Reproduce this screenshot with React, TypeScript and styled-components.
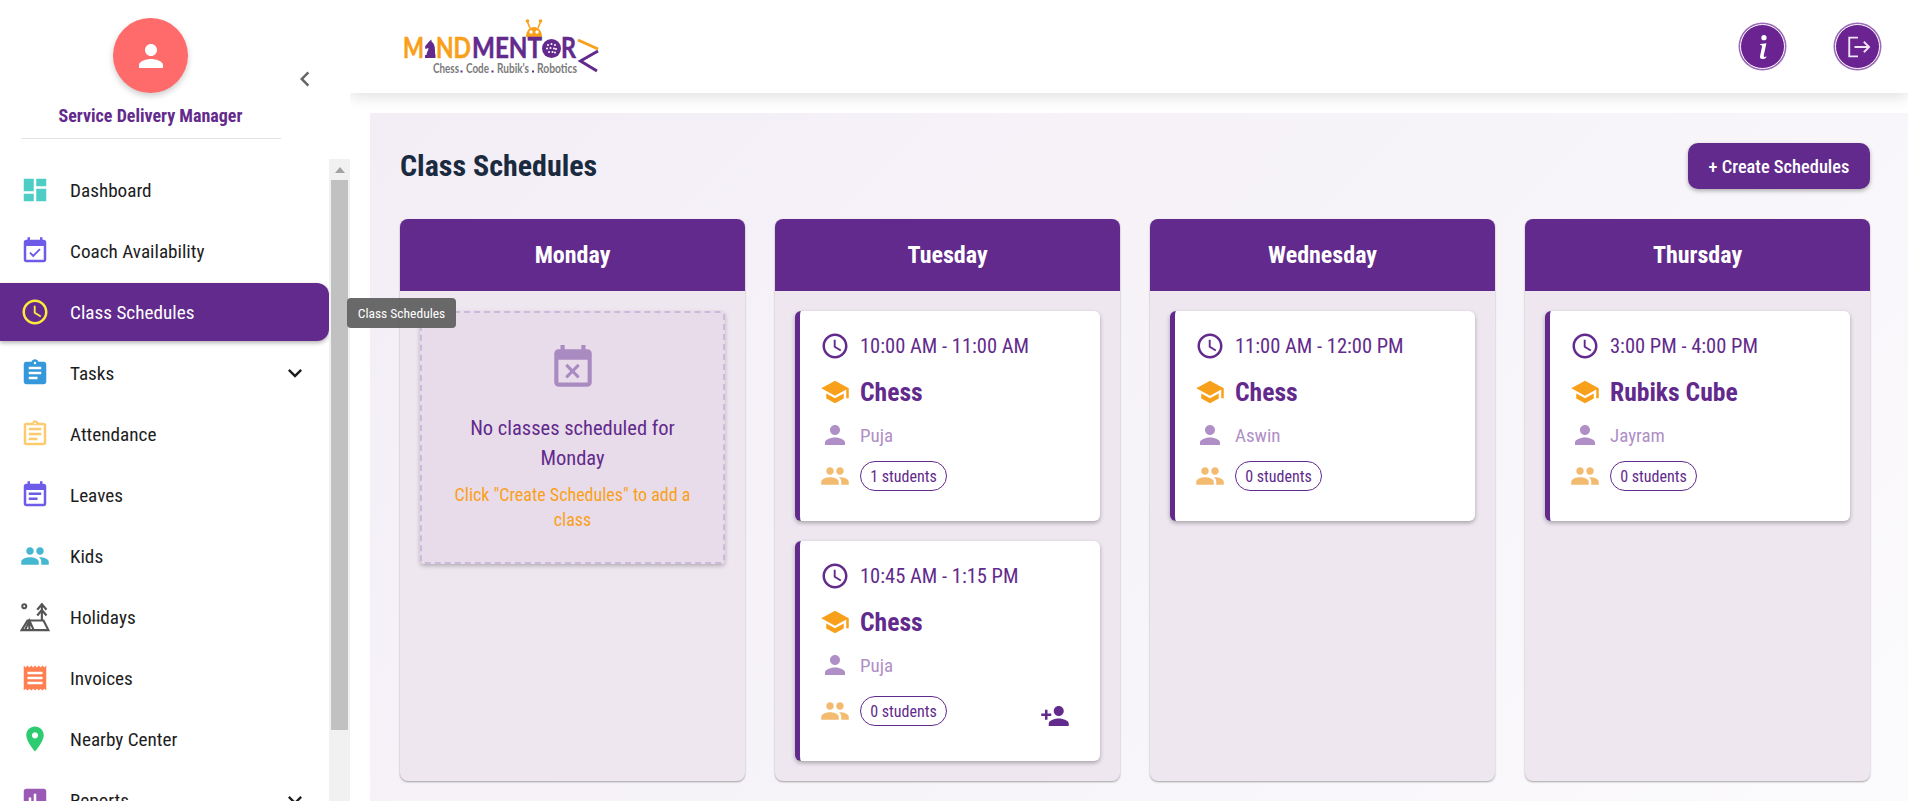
import React from 'react';
import styled, { createGlobalStyle } from 'styled-components';
import { BsInfoLg } from 'react-icons/bs';

const purple = '#622a8c';
const orange = '#f9a01b';

const icons = {
  dashboard: 'M3 13h8V3H3zm0 8h8v-6H3zm10 0h8V11h-8zm0-18v6h8V3z',
  eventAvailable:
    'M16.53 11.06 15.47 10l-4.88 4.88-2.12-2.12-1.06 1.06L10.59 17zM19 3h-1V1h-2v2H8V1H6v2H5c-1.11 0-1.99.9-1.99 2L3 19c0 1.1.89 2 2 2h14c1.1 0 2-.9 2-2V5c0-1.1-.9-2-2-2m0 16H5V8h14z',
  clock:
    'M11.99 2C6.47 2 2 6.48 2 12s4.47 10 9.99 10C17.52 22 22 17.52 22 12S17.52 2 11.99 2M12 20c-4.42 0-8-3.58-8-8s3.58-8 8-8 8 3.58 8 8-3.58 8-8 8m.5-13H11v6l5.25 3.15.75-1.23-4.5-2.67z',
  assignment:
    'M19 3h-4.18C14.4 1.84 13.3 1 12 1c-1.3 0-2.4.84-2.82 2H5c-1.1 0-2 .9-2 2v14c0 1.1.9 2 2 2h14c1.1 0 2-.9 2-2V5c0-1.1-.9-2-2-2m-7 0c.55 0 1 .45 1 1s-.45 1-1 1-1-.45-1-1 .45-1 1-1m2 14H7v-2h7zm3-4H7v-2h10zm0-4H7V7h10z',
  assignmentOutlined:
    'M7 15h7v2H7zm0-4h10v2H7zm0-4h10v2H7zm12-4h-4.18C14.4 1.84 13.3 1 12 1c-.14 0-.27.01-.4.04-.39.08-.74.28-1.01.55-.18.18-.33.4-.43.64-.1.23-.16.49-.16.77H5c-.14 0-.27.01-.4.04-.39.08-.74.28-1.01.55-.18.18-.33.4-.43.64-.1.24-.16.49-.16.77v14c0 .27.06.54.16.78s.25.45.43.64c.27.27.62.47 1.01.55.13.02.26.03.4.03h14c1.1 0 2-.9 2-2V5c0-1.1-.9-2-2-2m-7-.25c.41 0 .75.34.75.75s-.34.75-.75.75-.75-.34-.75-.75.34-.75.75-.75M19 19H5V5h14z',
  eventNote:
    'M17 10H7v2h10zm2-7h-1V1h-2v2H8V1H6v2H5c-1.11 0-1.99.9-1.99 2L3 19c0 1.1.89 2 2 2h14c1.1 0 2-.9 2-2V5c0-1.1-.9-2-2-2m0 16H5V8h14zm-5-5H7v2h7z',
  people:
    'M16 11c1.66 0 2.99-1.34 2.99-3S17.66 5 16 5c-1.66 0-3 1.34-3 3s1.34 3 3 3m-8 0c1.66 0 2.99-1.34 2.99-3S9.66 5 8 5C6.34 5 5 6.34 5 8s1.34 3 3 3m0 2c-2.33 0-7 1.17-7 3.5V19h14v-2.5c0-2.33-4.67-3.5-7-3.5m8 0c-.29 0-.62.02-.97.05 1.16.84 1.97 1.97 1.97 3.45V19h6v-2.5c0-2.33-4.67-3.5-7-3.5',
  receipt:
    'M18 17H6v-2h12zm0-4H6v-2h12zm0-4H6V7h12zM3 22l1.5-1.5L6 22l1.5-1.5L9 22l1.5-1.5L12 22l1.5-1.5L15 22l1.5-1.5L18 22l1.5-1.5L21 22V2l-1.5 1.5L18 2l-1.5 1.5L15 2l-1.5 1.5L12 2l-1.5 1.5L9 2 7.5 3.5 6 2 4.5 3.5 3 2z',
  place:
    'M12 2C8.13 2 5 5.13 5 9c0 5.25 7 13 7 13s7-7.75 7-13c0-3.87-3.13-7-7-7m0 9.5c-1.38 0-2.5-1.12-2.5-2.5s1.12-2.5 2.5-2.5 2.5 1.12 2.5 2.5-1.12 2.5-2.5 2.5',
  assessment:
    'M19 3H5c-1.1 0-2 .9-2 2v14c0 1.1.9 2 2 2h14c1.1 0 2-.9 2-2V5c0-1.1-.9-2-2-2M9 17H7v-7h2zm4 0h-2V7h2zm4 0h-2v-4h2z',
  person:
    'M12 12c2.21 0 4-1.79 4-4s-1.79-4-4-4-4 1.79-4 4 1.79 4 4 4m0 2c-2.67 0-8 1.34-8 4v2h16v-2c0-2.66-5.33-4-8-4',
  school: 'M5 13.18v4L12 21l7-3.82v-4L12 17zM12 3 1 9l11 6 9-4.91V17h2V9z',
  eventBusy:
    'M9.31 17l2.44-2.44L14.19 17l1.06-1.06-2.44-2.44 2.44-2.44L14.19 10l-2.44 2.44L9.31 10l-1.06 1.06 2.44 2.44-2.44 2.44L9.31 17zM19 3h-1V1h-2v2H8V1H6v2H5c-1.11 0-1.99.9-1.99 2L3 19c0 1.1.89 2 2 2h14c1.1 0 2-.9 2-2V5c0-1.1-.9-2-2-2zm0 16H5V8h14v11z',
  personAdd:
    'M15 12c2.21 0 4-1.79 4-4s-1.79-4-4-4-4 1.79-4 4 1.79 4 4 4m-9-2V7H4v3H1v2h3v3h2v-3h3v-2zm9 4c-2.67 0-8 1.34-8 4v2h16v-2c0-2.66-5.33-4-8-4',
  expand: 'M16.59 8.59 12 13.17 7.41 8.59 6 10l6 6 6-6z',
  chevronLeft: 'M15.41 7.41 14 6l-6 6 6 6 1.41-1.41L10.83 12z',
};

type IconName = keyof typeof icons;

const IconSvg = styled.svg`
  flex-shrink: 0;
`;

const Icon: React.FC<{ name: IconName; size: number; color: string }> = ({ name, size, color }) => (
  <IconSvg width={size} height={size} viewBox="0 0 24 24" fill={color}>
    <path d={icons[name]} />
  </IconSvg>
);

const GlobalStyle = createGlobalStyle`
  html, body {
    margin: 0;
    height: 801px;
    overflow: hidden;
    background: #fff;
    font-family: "Roboto Condensed", Roboto, "Liberation Sans", sans-serif;
    font-stretch: 75%;
  }
  * { box-sizing: border-box; }
`;

const Page = styled.div`
  display: flex;
  width: 1908px;
  height: 801px;
  overflow: hidden;
`;

const Sidebar = styled.aside`
  position: relative;
  z-index: 2;
  width: 350px;
  flex-shrink: 0;
  height: 801px;
  background: #fff;
`;

const Profile = styled.div`
  height: 159px;
  padding-top: 18px;
  display: flex;
  flex-direction: column;
  align-items: center;
  width: 301px;
`;

const AvatarCircle = styled.div`
  width: 75px;
  height: 75px;
  border-radius: 50%;
  background: #ff6b6b;
  display: flex;
  align-items: center;
  justify-content: center;
  box-shadow: 0 3px 6px rgba(0, 0, 0, 0.2);
`;

const RoleName = styled.div`
  margin-top: 12px;
  font-size: 18px;
  line-height: 22px;
  font-weight: 700;
  color: ${purple};
`;

const Divider = styled.div`
  width: 260px;
  height: 1px;
  margin-top: 11px;
  background: #e3e3e3;
`;

const CollapseButton = styled.div`
  position: absolute;
  left: 290px;
  top: 64px;
  display: flex;
`;

const NavArea = styled.div`
  display: flex;
  height: 642px;
  overflow: hidden;
`;

const NavList = styled.nav`
  width: 329px;
  padding-top: 2px;
  display: flex;
  flex-direction: column;
`;

const NavItem = styled.div<{ $active?: boolean }>`
  height: 58px;
  flex-shrink: 0;
  margin-bottom: 3px;
  display: flex;
  align-items: center;
  padding-left: 20px;
  gap: 20px;
  font-size: 19.2px;
  border-radius: 0 12px 12px 0;
  color: ${(p) => (p.$active ? '#fff' : '#1d1d1d')};
  background: ${(p) => (p.$active ? purple : 'transparent')};
  box-shadow: ${(p) => (p.$active ? '0 2px 4px rgba(0,0,0,0.3)' : 'none')};
`;

const NavLabel = styled.span`
  flex: 1;
`;

const NavCaret = styled.span`
  display: flex;
  margin-right: 20px;
`;

const ScrollTrack = styled.div`
  width: 21px;
  height: 642px;
  background: #f1f1f1;
  display: flex;
  flex-direction: column;
  align-items: center;
`;

const ScrollArrow = styled.div`
  height: 21px;
  display: flex;
  align-items: center;
  justify-content: center;
  &::before {
    content: '';
    border-left: 5px solid transparent;
    border-right: 5px solid transparent;
    border-bottom: 6px solid #a3a3a3;
  }
`;

const ScrollThumb = styled.div`
  width: 17px;
  height: 550px;
  background: #c1c1c1;
`;

const Tooltip = styled.div`
  position: absolute;
  left: 347px;
  top: 298px;
  width: 109px;
  height: 30px;
  border-radius: 4px;
  background: rgba(97, 97, 97, 0.95);
  color: #fff;
  font-size: 13.5px;
  display: flex;
  align-items: center;
  justify-content: center;
  z-index: 10;
`;

const Main = styled.div`
  flex: 1;
  min-width: 0;
  display: flex;
  flex-direction: column;
`;

const Header = styled.header`
  position: relative;
  height: 93px;
  flex-shrink: 0;
  background: #fff;
  box-shadow: 0 4px 14px rgba(0, 0, 0, 0.12);
  display: flex;
  align-items: center;
  justify-content: space-between;
  padding: 0 28px 0 50px;
`;

const LogoSvg = styled.svg`
  font-family: Lato, "Open Sans", sans-serif;
  font-stretch: normal;
`;

const HeaderActions = styled.div`
  display: flex;
  gap: 50px;
`;

const RoundButton = styled.div`
  width: 45px;
  height: 45px;
  border-radius: 50%;
  background: #6a2391;
  border: 1px solid #fff;
  box-shadow: 0 0 0 1.5px #9c6cb8;
  display: flex;
  align-items: center;
  justify-content: center;
  color: #fff;
`;

const Content = styled.main`
  flex: 1;
  margin: 20px 0 0 20px;
  padding: 30px 38px 0 30px;
  background: linear-gradient(135deg, #f3eef6 0%, #fbfafc 100%);
`;

const TitleRow = styled.div`
  display: flex;
  align-items: center;
  justify-content: space-between;
  height: 46px;
  margin-bottom: 30px;
`;

const PageTitle = styled.h1`
  margin: -2px 0 0;
  font-size: 30px;
  font-weight: 700;
  color: #1a2a3f;
`;

const CreateButton = styled.button`
  width: 182px;
  height: 46px;
  border: 0;
  border-radius: 10px;
  background: ${purple};
  color: #fff;
  font: inherit;
  font-size: 18.4px;
  font-weight: 500;
  box-shadow: 0 2px 4px rgba(0, 0, 0, 0.3);
`;

const Columns = styled.div`
  display: grid;
  grid-template-columns: repeat(4, 345px);
  gap: 30px;
`;

const Column = styled.section`
  height: 562px;
  border-radius: 8px;
  background: #eee7f0;
  box-shadow: 0 1px 2px rgba(0, 0, 0, 0.35);
  overflow: hidden;
`;

const ColumnHeader = styled.div`
  height: 72px;
  background: ${purple};
  color: #fff;
  font-size: 24px;
  font-weight: 700;
  display: flex;
  align-items: center;
  justify-content: center;
`;

const ColumnBody = styled.div`
  padding: 20px;
  display: flex;
  flex-direction: column;
  gap: 20px;
`;

const EmptyBox = styled.div`
  height: 253px;
  border: 2px dashed #cdb9dc;
  border-radius: 4px;
  background: #e8dcea;
  box-shadow: 0 2px 4px rgba(0, 0, 0, 0.25);
  padding: 30px 20px 0;
  display: flex;
  flex-direction: column;
  align-items: center;
  text-align: center;
`;

const EmptyTitle = styled.div`
  margin-top: 20px;
  font-size: 20.5px;
  line-height: 30px;
  color: ${purple};
`;

const EmptyHint = styled.div`
  margin-top: 9px;
  font-size: 18px;
  line-height: 25px;
  color: ${orange};
`;

const Card = styled.article<{ $tall?: boolean }>`
  position: relative;
  height: ${(p) => (p.$tall ? 220 : 210)}px;
  border-left: 5px solid ${purple};
  border-radius: 6px;
  background: #fff;
  box-shadow: 0 2px 4px rgba(0, 0, 0, 0.3);
  padding: 20px 20px 0 21px;
`;

const InfoRow = styled.div<{ $height: number; $top?: number }>`
  display: flex;
  align-items: center;
  gap: 11px;
  height: ${(p) => p.$height}px;
  margin-top: ${(p) => p.$top ?? 0}px;
`;

const IconSlot = styled.span`
  display: flex;
  justify-content: center;
  width: 28px;
`;

const TimeText = styled.span`
  font-size: 20.5px;
  color: ${purple};
`;

const ClassName = styled.span`
  font-size: 25.6px;
  font-weight: 700;
  color: ${purple};
`;

const CoachName = styled.span`
  font-size: 19px;
  color: #b08fc7;
`;

const StudentChip = styled.span`
  width: 87px;
  height: 30px;
  border: 1px solid ${purple};
  border-radius: 15px;
  color: ${purple};
  font-size: 16px;
  display: flex;
  align-items: center;
  justify-content: center;
`;

const AddStudent = styled.span`
  position: absolute;
  left: 240px;
  bottom: 30px;
  display: flex;
`;

const navItems: { label: string; icon?: IconName; color?: string; active?: boolean; caret?: boolean }[] = [
  { label: 'Dashboard', icon: 'dashboard', color: '#4ecdc4' },
  { label: 'Coach Availability', icon: 'eventAvailable', color: '#6c5ce7' },
  { label: 'Class Schedules', icon: 'clock', color: '#ffeb3b', active: true },
  { label: 'Tasks', icon: 'assignment', color: '#3498db', caret: true },
  { label: 'Attendance', icon: 'assignmentOutlined', color: '#fdcb6e' },
  { label: 'Leaves', icon: 'eventNote', color: '#6c5ce7' },
  { label: 'Kids', icon: 'people', color: '#45b7d1' },
  { label: 'Holidays' },
  { label: 'Invoices', icon: 'receipt', color: '#ff7f50' },
  { label: 'Nearby Center', icon: 'place', color: '#2ecc71' },
  { label: 'Reports', icon: 'assessment', color: '#9b59b6', caret: true },
];

const HolidayIcon = () => (
  <IconSvg width={30} height={30} viewBox="0 0 24 24" fill="none" stroke="#555" strokeWidth="1.7">
    <circle cx="3.400" cy="3.400" r="1.600" />
    <path d="M1.300 22.500h21.400L18.800 14.800H6z" />
    <path d="M7.500 14.800v7.700M4 22.500l3.500-7.700 3.500 7.700" />
    <path d="M17.500 14.800V1.500M13.800 6.200 17.500 1.800l3.700 4.400M13.800 10.800l3.700-4.400 3.700 4.400" />
  </IconSvg>
);

const rubikDots = [
  [148, 29], [151.500, 28], [155, 29], [147, 32.500], [150.500, 32], [154, 32.500], [156, 33], [149, 36], [152.500, 36], [155, 36.500],
];

const taglineWords: [string, number, number][] = [
  ['Chess', 33, 26],
  ['Code', 66, 23],
  ["Rubik's", 97, 32],
  ['Robotics', 137, 40],
];

const Logo = () => (
  <LogoSvg width={200} height={62} viewBox="0 0 200 62">
    {/* robot */}
    <path d="M130 12 127.500 6M138 12l2.500-6" stroke={orange} strokeWidth="1.600" />
    <circle cx="127.500" cy="5" r="1.800" fill={orange} />
    <circle cx="140.500" cy="5" r="1.800" fill={orange} />
    <path d="M126 21c0-6 3.500-10 8-10s8 4 8 10z" fill={orange} />
    <circle cx="131" cy="16" r="1.700" fill="#fff" />
    <circle cx="137" cy="16" r="1.700" fill="#fff" />
    {/* wordmark */}
    <g fontSize="28" fontWeight="700" strokeWidth="0.500" lengthAdjust="spacingAndGlyphs">
      <text x="3" y="42" fill={orange} stroke={orange} textLength="21" lengthAdjust="spacingAndGlyphs">M</text>
      <text x="36" y="42" fill={orange} stroke={orange} textLength="35" lengthAdjust="spacingAndGlyphs">ND</text>
      <text x="72" y="42" fill={purple} stroke={purple} textLength="70" lengthAdjust="spacingAndGlyphs">MENT</text>
      <text x="161" y="42" fill={purple} stroke={purple} textLength="15" lengthAdjust="spacingAndGlyphs">R</text>
    </g>
    <path d="M25 42v-3h1.500c0-3 2-4.500 2-7l-3 1-.5-2.500 4-5 2.500-2v2c2.500 1.500 3.500 5 3.500 9 0 2 0 3 .5 4.500V42z" fill={purple} />
    <circle cx="151.500" cy="32.500" r="9.500" fill={purple} />
    {rubikDots.map(([x, y]) => (
      <circle key={`${x}-${y}`} cx={x} cy={y} r="1" fill="#fff" />
    ))}
    {/* tagline */}
    <g fontSize="12.500" fontWeight="700" fill="#7b7b7b">
      {taglineWords.map(([word, x, width]) => (
        <text key={word} x={x} y="56.500" textLength={width} lengthAdjust="spacingAndGlyphs">{word}</text>
      ))}
    </g>
    <rect x="60.500" y="54.500" width="2" height="2" fill={purple} />
    <rect x="91.500" y="54.500" width="2" height="2" fill={purple} />
    <rect x="132" y="54.500" width="2" height="2" fill={purple} />
    <path d="M178 24 198 33" fill="none" stroke={orange} strokeWidth="3" />
    <path d="M198 35 180.500 45 197 55" fill="none" stroke={purple} strokeWidth="3" />
  </LogoSvg>
);

const days: {
  day: string;
  empty?: boolean;
  cards: { time: string; name: string; coach: string; students: number; tall?: boolean }[];
}[] = [
  { day: 'Monday', empty: true, cards: [] },
  {
    day: 'Tuesday',
    cards: [
      { time: '10:00 AM - 11:00 AM', name: 'Chess', coach: 'Puja', students: 1 },
      { time: '10:45 AM - 1:15 PM', name: 'Chess', coach: 'Puja', students: 0, tall: true },
    ],
  },
  {
    day: 'Wednesday',
    cards: [{ time: '11:00 AM - 12:00 PM', name: 'Chess', coach: 'Aswin', students: 0 }],
  },
  {
    day: 'Thursday',
    cards: [{ time: '3:00 PM - 4:00 PM', name: 'Rubiks Cube', coach: 'Jayram', students: 0 }],
  },
];

export default function App() {
  return (
    <Page>
      <GlobalStyle />
      <Sidebar>
        <Profile>
          <AvatarCircle>
            <Icon name="person" size={36} color="#fff" />
          </AvatarCircle>
          <RoleName>Service Delivery Manager</RoleName>
          <Divider />
        </Profile>
        <CollapseButton>
          <Icon name="chevronLeft" size={30} color="#666" />
        </CollapseButton>
        <NavArea>
          <NavList>
            {navItems.map((item) => (
              <NavItem key={item.label} $active={item.active}>
                {item.icon ? <Icon name={item.icon} size={30} color={item.color ?? '#000'} /> : <HolidayIcon />}
                <NavLabel>{item.label}</NavLabel>
                {item.caret && (
                  <NavCaret>
                    <Icon name="expand" size={28} color="#1d1d1d" />
                  </NavCaret>
                )}
              </NavItem>
            ))}
          </NavList>
          <ScrollTrack>
            <ScrollArrow />
            <ScrollThumb />
          </ScrollTrack>
        </NavArea>
        <Tooltip>Class Schedules</Tooltip>
      </Sidebar>
      <Main>
        <Header>
          <Logo />
          <HeaderActions>
            <RoundButton>
              <BsInfoLg size={32} />
            </RoundButton>
            <RoundButton>
              <svg width={28} height={28} viewBox="0 0 24 24" fill="none" stroke="#f1e4f6" strokeWidth="1.6">
                <path d="M12 4H4.500v16H12M9 12h12M17 7.500 21.500 12 17 16.500" />
              </svg>
            </RoundButton>
          </HeaderActions>
        </Header>
        <Content>
          <TitleRow>
            <PageTitle>Class Schedules</PageTitle>
            <CreateButton>+ Create Schedules</CreateButton>
          </TitleRow>
          <Columns>
            {days.map((d) => (
              <Column key={d.day}>
                <ColumnHeader>{d.day}</ColumnHeader>
                <ColumnBody>
                  {d.empty && (
                    <EmptyBox>
                      <Icon name="eventBusy" size={50} color="#a98bc2" />
                      <EmptyTitle>No classes scheduled for {d.day}</EmptyTitle>
                      <EmptyHint>Click "Create Schedules" to add a class</EmptyHint>
                    </EmptyBox>
                  )}
                  {d.cards.map((c) => (
                    <Card key={c.time} $tall={c.tall}>
                      <InfoRow $height={30}>
                        <IconSlot>
                          <Icon name="clock" size={30} color={purple} />
                        </IconSlot>
                        <TimeText>{c.time}</TimeText>
                      </InfoRow>
                      <InfoRow $height={32} $top={15}>
                        <IconSlot>
                          <Icon name="school" size={30} color={orange} />
                        </IconSlot>
                        <ClassName>{c.name}</ClassName>
                      </InfoRow>
                      <InfoRow $height={26} $top={14}>
                        <IconSlot>
                          <Icon name="person" size={30} color="#b08fc7" />
                        </IconSlot>
                        <CoachName>{c.coach}</CoachName>
                      </InfoRow>
                      <InfoRow $height={30} $top={c.tall ? 18 : 13}>
                        <IconSlot>
                          <Icon name="people" size={30} color="#f2bb6f" />
                        </IconSlot>
                        <StudentChip>{c.students} students</StudentChip>
                      </InfoRow>
                      {c.tall && (
                        <AddStudent>
                          <Icon name="personAdd" size={30} color={purple} />
                        </AddStudent>
                      )}
                    </Card>
                  ))}
                </ColumnBody>
              </Column>
            ))}
          </Columns>
        </Content>
      </Main>
    </Page>
  );
}
